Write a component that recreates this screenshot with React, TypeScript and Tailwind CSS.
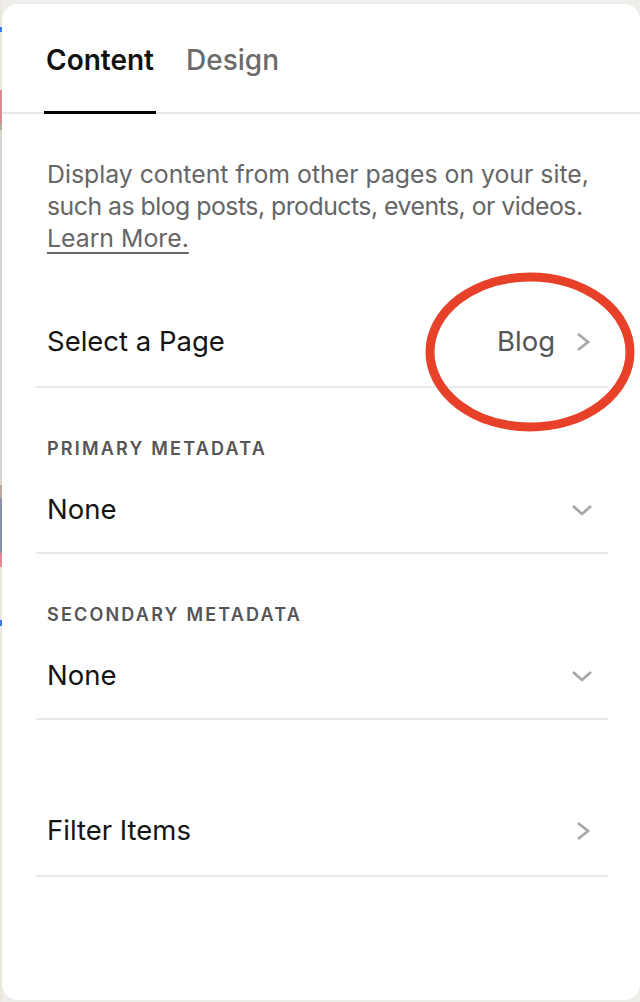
const strip = [
  { h: 27, c: "bg-[#ebe7df]" },
  { h: 5, c: "bg-[#3b7be0]" },
  { h: 58, c: "bg-[#ebe7df]" },
  { h: 33, c: "bg-[#d98a94]" },
  { h: 7, c: "bg-[#b8aa9c]" },
  { h: 355, c: "bg-[#d8d4d0]" },
  { h: 13, c: "bg-[#b8aa9c]" },
  { h: 55, c: "bg-[#8a8fa8]" },
  { h: 14, c: "bg-[#d98a94]" },
  { h: 53, c: "bg-[#ebe7df]" },
  { h: 6, c: "bg-[#3b7be0]" },
  { h: 376, c: "bg-[#ebe7df]" },
];

function ChevRight() {
  return (
    <svg width="16" height="20" viewBox="0 0 16 20" className="text-[#a8a8a8]">
      <polyline points="3,2 13,10 3,18" fill="none" stroke="currentColor" strokeWidth="2.8" />
    </svg>
  );
}

function ChevDown() {
  return (
    <svg width="22" height="14" viewBox="0 0 22 14" className="text-[#a8a8a8]">
      <polyline points="2,3 11,11 20,3" fill="none" stroke="currentColor" strokeWidth="2.8" />
    </svg>
  );
}

function NavRow({ label, value, className }: { label: string; value?: string; className?: string }) {
  return (
    <div className={`flex items-center justify-between border-b-2 border-[#e8e8e8] pl-[11px] pr-[17px] ${className ?? ""}`}>
      <span className="text-[27.5px] text-[#141414]">{label}</span>
      <span className="flex items-center gap-[20px]">
        {value && <span className="text-[27.5px] text-[#555]">{value}</span>}
        <ChevRight />
      </span>
    </div>
  );
}

function MetaSelect({ label }: { label: string }) {
  return (
    <div className="pt-[49px]">
      <div className="pl-[11px] text-[18px] font-semibold uppercase leading-[24px] tracking-[2.2px] text-[#555]">
        {label}
      </div>
      <div className="flex h-[93px] items-center justify-between border-b-2 border-[#e8e8e8] pl-[11px] pr-[15px] pt-[7px]">
        <span className="text-[27.5px] text-[#141414]">None</span>
        <ChevDown />
      </div>
    </div>
  );
}

export default function App() {
  return (
    <div className="relative flex h-[1002px] w-[640px] overflow-hidden bg-[#efedea] font-['Inter',_sans-serif]">
      <div className="flex w-[2px] shrink-0 flex-col">
        {strip.map((s, i) => (
          <div key={i} className={s.c} style={{ height: s.h }} />
        ))}
      </div>
      <div className="mb-[2px] mt-[4px] flex-1 rounded-[16px] bg-white">
        <div className="flex gap-[30px] border-b-2 border-[#e8e8e8] pl-[42px]">
          <div className="-mb-[2px] border-b-[3px] border-black px-[2px] pb-[30px] pt-[35px] text-[28px] font-semibold text-[#111]">
            Content
          </div>
          <div className="pb-[30px] pt-[35px] text-[28px] font-medium text-[#6b6b6b]">Design</div>
        </div>
        <div className="pl-[34px] pr-[32px]">
          <p className="mt-[44px] whitespace-nowrap pl-[11px] text-[24.8px] leading-[32px] text-[#666]">
            Display content from other pages on your site,
            <br />
            <span className="tracking-[-0.5px]">such as blog posts, products, events, or videos.</span>
            <br />
            <span className="underline decoration-[2px] underline-offset-[5px]">Learn More.</span>
          </p>
          <NavRow label="Select a Page" value="Blog" className="mt-[44px] h-[90px]" />
          <MetaSelect label="Primary Metadata" />
          <MetaSelect label="Secondary Metadata" />
          <NavRow label="Filter Items" className="mt-[67px] h-[90px]" />
        </div>
      </div>
      <svg className="absolute left-[425px] top-[272px]" width="210" height="160" viewBox="0 0 210 160">
        <ellipse cx="105" cy="80" rx="100" ry="75" fill="none" stroke="#e8412a" strokeWidth="9" />
      </svg>
    </div>
  );
}
